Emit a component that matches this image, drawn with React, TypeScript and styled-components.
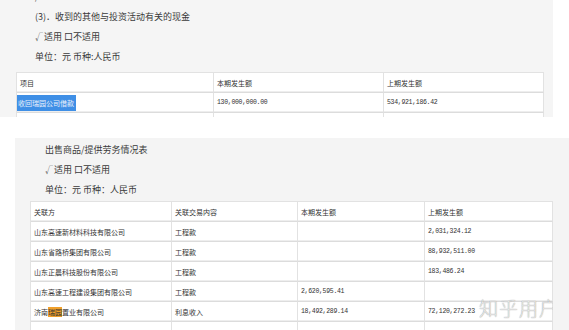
import React from "react";
import styled, { createGlobalStyle } from "styled-components";

const Global = createGlobalStyle`
  html, body { margin: 0; padding: 0; background: #ffffff; }
  body { font-family: "Noto Sans CJK SC", "Noto Sans", sans-serif; color: #333; }
  #root { width: 569px; height: 330px; overflow: hidden; }
`;

const Page = styled.div`
  display: flex;
  flex-direction: column;
  width: 569px;
  height: 330px;
  overflow: hidden;
`;

const TopPanel = styled.section`
  width: 553px;
  height: 117px;
  background: #f5f5f5;
  padding-left: 16px;
  box-sizing: border-box;
  overflow: hidden;
  flex-shrink: 0;
`;

const BottomPanel = styled.section`
  margin-top: 21px;
  margin-left: 15px;
  flex: 1;
  background: #f4f4f4;
  padding-left: 15px;
  box-sizing: border-box;
  overflow: hidden;
`;

const TextBlock = styled.div<{ $indent: number; $offset: number }>`
  padding-left: ${(p) => p.$indent}px;
  margin-top: ${(p) => p.$offset}px;
  display: flex;
  flex-direction: column;
`;

const Line = styled.div`
  height: 20px;
  line-height: 20px;
  font-size: 9px;
  color: #3a3a3a;
  white-space: nowrap;
`;

const Check = styled.span`
  font-size: 8px;
  color: #555;
  margin-right: 1px;
`;

const TableWrap = styled.div<{ $width: number; $top: number }>`
  position: relative;
  width: ${(p) => p.$width}px;
  margin-top: ${(p) => p.$top}px;
  overflow: hidden;
`;

const Table = styled.div<{ $cols: string }>`
  display: grid;
  grid-template-columns: ${(p) => p.$cols};
  background: #ffffff;
  border-left: 1px solid #e2e2e2;
  border-top: 1px solid #e2e2e2;
`;

const Cell = styled.div`
  height: 19px;
  border-right: 1px solid #e2e2e2;
  border-bottom: 1px solid #dcdcdc;
  box-shadow: inset 0 -1px 0 #eeeeee;
  display: flex;
  align-items: center;
  padding-left: 3px;
  font-size: 7px;
  color: #333;
  white-space: nowrap;
  overflow: hidden;
`;

const Num = styled.span`
  font-family: "Liberation Mono", "DejaVu Sans Mono", monospace;
  font-size: 6.5px;
  letter-spacing: -0.3px;
  color: #333;
`;

const Selected = styled.span`
  background: #3f8fe6;
  color: #e8f1fb;
  padding: 3px 2px 3px 1px;
  margin-left: -3px;
`;

const Mark = styled.span`
  background: #f0a02c;
  color: #333;
`;

const Watermark = styled.div`
  position: absolute;
  right: -6px;
  top: 97px;
  font-size: 19px;
  line-height: 1;
  font-weight: 100;
  letter-spacing: 1px;
  color: #fafafa;
  text-shadow: 0 0 1px #8c8c8c, 0 0 1px #8c8c8c;
  font-family: "Noto Sans CJK SC", sans-serif;
  white-space: nowrap;
`;

const Clipped = styled.div`
  height: 20px;
  margin-top: -13px;
  line-height: 20px;
  font-size: 9px;
  color: #555;
`;

type Row = [React.ReactNode, string, string, string];

const rows: Row[] = [
  ["山东高速新材料科技有限公司", "工程款", "", "2,031,324.12"],
  ["山东省路桥集团有限公司", "工程款", "", "88,932,511.00"],
  ["山东正晨科技股份有限公司", "工程款", "", "183,486.24"],
  ["山东高速工程建设集团有限公司", "工程款", "2,620,595.41", ""],
  [
    <>
      济南<Mark>瑞园</Mark>置业有限公司
    </>,
    "利息收入",
    "18,492,289.14",
    "72,120,272.23",
  ],
  ["", "", "", ""],
];

export default function App() {
  return (
    <Page>
      <Global />
      <TopPanel>
        <TextBlock $indent={19} $offset={0}>
          <Clipped>/</Clipped>
          <Line>(3)．收到的其他与投资活动有关的现金</Line>
          <Line>
            <Check>√</Check>适用 口不适用
          </Line>
          <Line>单位：元 币种:人民币</Line>
        </TextBlock>
        <TableWrap $width={528} $top={5}>
          <Table $cols="197px 170px 160px">
            <Cell>项目</Cell>
            <Cell>本期发生额</Cell>
            <Cell>上期发生额</Cell>
            <Cell>
              <Selected>收回瑞园公司借款</Selected>
            </Cell>
            <Cell>
              <Num>130,000,000.00</Num>
            </Cell>
            <Cell>
              <Num>534,921,186.42</Num>
            </Cell>
            <Cell />
            <Cell />
            <Cell />
          </Table>
        </TableWrap>
      </TopPanel>
      <BottomPanel>
        <TextBlock $indent={15} $offset={2}>
          <Line>出售商品/提供劳务情况表</Line>
          <Line>
            <Check>√</Check>适用 口不适用
          </Line>
          <Line>单位：元 币种：人民币</Line>
        </TextBlock>
        <TableWrap $width={523} $top={1}>
          <Table $cols="141px 126px 127px 128px">
            <Cell>关联方</Cell>
            <Cell>关联交易内容</Cell>
            <Cell>本期发生额</Cell>
            <Cell>上期发生额</Cell>
            {rows.map((r, i) => (
              <React.Fragment key={i}>
                <Cell>{r[0]}</Cell>
                <Cell>{r[1]}</Cell>
                <Cell>
                  <Num>{r[2]}</Num>
                </Cell>
                <Cell>
                  <Num>{r[3]}</Num>
                </Cell>
              </React.Fragment>
            ))}
          </Table>
          <Watermark>知乎用户</Watermark>
        </TableWrap>
      </BottomPanel>
    </Page>
  );
}
